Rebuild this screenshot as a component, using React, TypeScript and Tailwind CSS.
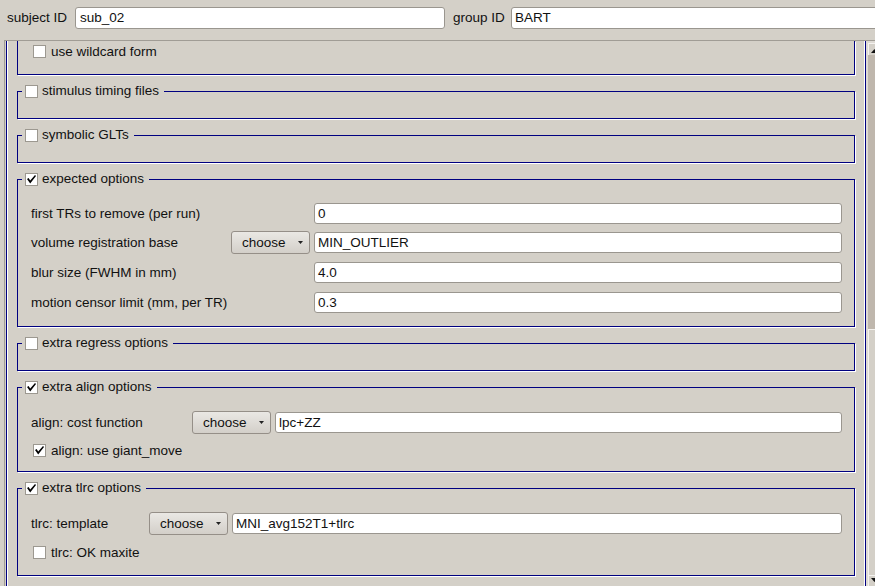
import React from 'react';

const NAVY = 'border-[#000080]';

function Check({ on = false }: { on?: boolean }) {
  return (
    <span className="w-[13px] h-[13px] shrink-0 border border-[#9c9890] bg-white flex items-center justify-center">
      {on && (
        <svg width="11" height="11" viewBox="0 0 11 11">
          <path d="M1 5 L2.6 4 L4.2 6.4 L9 1 L10 2 L4.2 9.6 Z" fill="#000" />
        </svg>
      )}
    </span>
  );
}

function TextBox({ value, w }: { value: string; w: number }) {
  return (
    <div
      className="h-[21px] mt-[1px] border border-[#9a968f] rounded-[3px] bg-white pl-[3px] flex items-center shrink-0 text-[#111]"
      style={{ width: w }}
    >
      {value}
    </div>
  );
}

function Choose() {
  return (
    <button className="w-[79px] h-[23px] shrink-0 border border-[#958f88] rounded-[3px] bg-gradient-to-b from-[#eae8e4] to-[#d3cfc9] flex items-center pl-[10px] pr-[6px] text-[#111]">
      <span className="flex-1 text-left">choose</span>
      <svg width="5" height="3" viewBox="0 0 5 3">
        <path d="M0 0 H5 L2.5 3 Z" fill="#222" />
      </svg>
    </button>
  );
}

function Frame({
  title,
  on = false,
  children,
  className = '',
}: {
  title: string;
  on?: boolean;
  children?: React.ReactNode;
  className?: string;
}) {
  return (
    <fieldset className={`border ${NAVY} pl-[4px] mt-[9px] min-w-0 shadow-[1px_1px_0_#fff]`}>
      <legend className="flex items-center h-[14px] pl-[3px] pr-[5px]">
        <Check on={on} />
        <span className="ml-[4px] text-[#111]">{title}</span>
      </legend>
      <div className={className}>{children ?? <div className="h-[20px]" />}</div>
    </fieldset>
  );
}

function Row({ label, choose, w, value, top = 0 }: { label: string; choose?: boolean; w: number; value: string; top?: number }) {
  return (
    <div className="flex items-start h-[23px] gap-[4px]" style={{ marginTop: top }}>
      <span className="flex-1 self-center text-[#111] whitespace-nowrap">{label}</span>
      {choose && <Choose />}
      <TextBox value={value} w={w} />
    </div>
  );
}

function CheckRow({ label, on = false }: { label: string; on?: boolean }) {
  return (
    <div className="flex items-center h-[15px] pl-[2px] gap-[5px]">
      <Check on={on} />
      <span className="text-[#111]">{label}</span>
    </div>
  );
}

export default function App() {
  return (
    <div
      className="w-[875px] h-[586px] overflow-hidden bg-[#d4d0c8] flex flex-col text-[13.5px] leading-none"
      style={{ fontFamily: '"Liberation Sans", Arial, sans-serif' }}
    >
      <div className="h-[40px] shrink-0 flex items-start pt-[7px] pl-[7px] whitespace-nowrap overflow-hidden">
        <span className="w-[68px] shrink-0 h-[22px] flex items-center text-[#111]">subject ID</span>
        <div className="w-[370px] shrink-0 h-[22px] border border-[#9a968f] rounded-[3px] bg-white pl-[4px] flex items-center text-[#111]">sub_02</div>
        <span className="w-[66px] shrink-0 h-[22px] pl-[8px] flex items-center text-[#111]">group ID</span>
        <div className="w-[400px] shrink-0 h-[22px] border border-[#9a968f] rounded-[3px] bg-white pl-[3px] flex items-center text-[#111]">BART</div>
      </div>

      <div className="flex-1 ml-[4px] border-l border-t border-[#a09c95] flex overflow-hidden">
        <div className="pl-[1px] shrink-0">
          <div className={`w-[860px] h-full border-l border-r ${NAVY} px-[10px] shadow-[inset_1px_0_0_#fff,inset_-1px_0_0_#fff]`}>
            <div className={`border-l border-r border-b ${NAVY} shadow-[1px_1px_0_#fff] pl-[4px] pt-[3px] pb-[15px]`}>
              <div className="pl-[9px]">
                <CheckRow label="use wildcard form" />
              </div>
            </div>

            <Frame title="stimulus timing files" />
            <Frame title="symbolic GLTs" />

            <Frame title="expected options" on className="pl-[9px] pr-[12px] pt-[16px] pb-[12px]">
              <Row label="first TRs to remove (per run)" w={528} value="0" />
              <Row label="volume registration base" choose w={528} value="MIN_OUTLIER" top={6} />
              <Row label="blur size (FWHM in mm)" w={528} value="4.0" top={7} />
              <Row label="motion censor limit (mm, per TR)" w={528} value="0.3" top={7} />
            </Frame>

            <Frame title="extra regress options" />

            <Frame title="extra align options" on className="pl-[9px] pr-[12px] pt-[17px] pb-[13px]">
              <Row label="align: cost function" choose w={567} value="lpc+ZZ" />
              <div className="mt-[9px]">
                <CheckRow label="align: use giant_move" on />
              </div>
            </Frame>

            <Frame title="extra tlrc options" on className="pl-[9px] pr-[12px] pt-[17px] pb-[15px]">
              <Row label="tlrc: template" choose w={610} value="MNI_avg152T1+tlrc" />
              <div className="mt-[10px]">
                <CheckRow label="tlrc: OK maxite" />
              </div>
            </Frame>
          </div>
        </div>

        {/* scrollbar, mostly cut off by the window edge */}
        <div className="flex-1 min-w-0 flex flex-col pl-[2px] bg-[#dedad4] overflow-hidden">
          <div className="h-[12px] mt-[2px] w-[20px] border-t border-l border-[#f4f2ef] bg-[#d4d0c8] relative">
            <svg className="absolute left-[2px] top-[5px]" width="7" height="4" viewBox="0 0 7 4">
              <path d="M0 4 L3.5 0 L7 4 Z" fill="#111" />
            </svg>
          </div>
          <div className="h-[274px] w-[20px] bg-[#bfb7ad]" />
          <div className="flex-1 w-[20px] border-l border-t border-[#f4f2ef] bg-[#d4d0c8]" />
          <div className="h-[11px] w-[20px] border-t border-l border-[#f4f2ef] bg-[#d4d0c8] relative">
            <svg className="absolute left-[2px] top-[2px]" width="7" height="4" viewBox="0 0 7 4">
              <path d="M0 0 L7 0 L3.5 4 Z" fill="#111" />
            </svg>
          </div>
        </div>
      </div>
    </div>
  );
}
